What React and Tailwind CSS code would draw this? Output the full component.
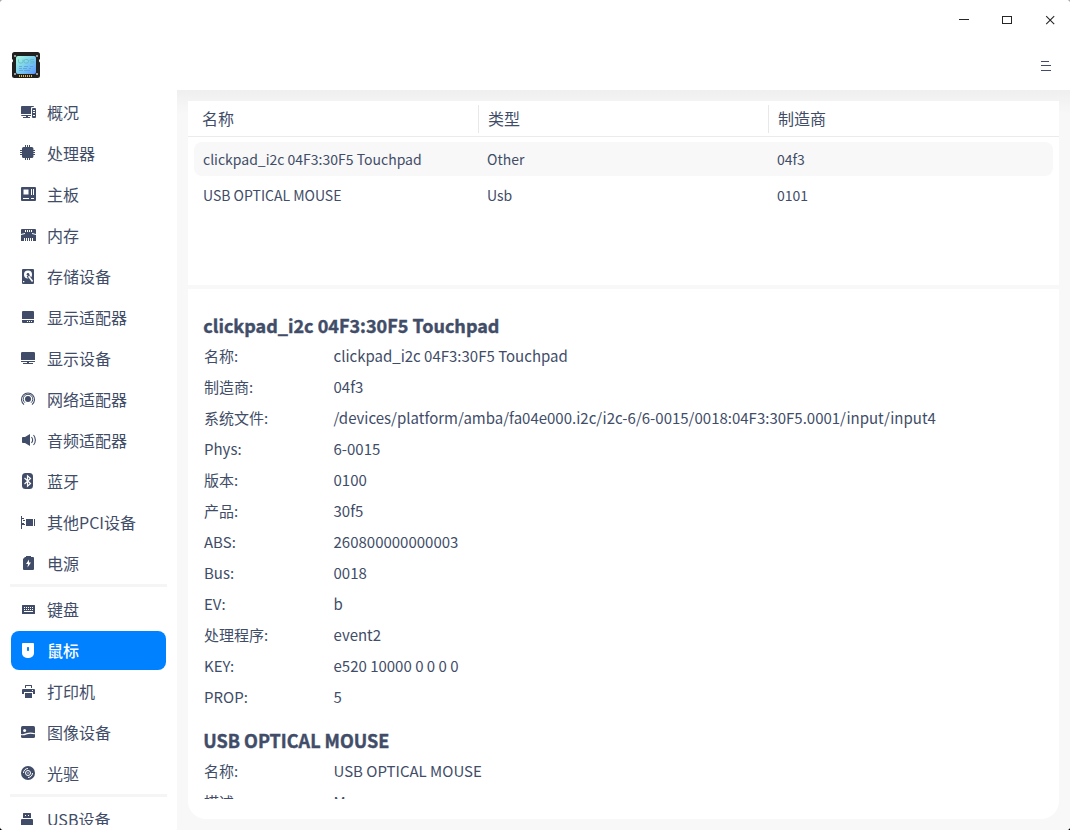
import React from "react";

const Icon = ({ children }) => (
  <svg width="16" height="16" viewBox="0 0 16 16" fill="currentColor" className="shrink-0">
    {children}
  </svg>
);

const icons = {
  overview: (
    <>
      <path d="M2 2h11a1 1 0 0 1 1 1h-2a1 1 0 0 0-1 1v6H1V3a1 1 0 0 1 1-1zM1 11h10v1H8v1h2v1H3v-1h3v-1H2a1 1 0 0 1-1-1z" />
      <path fillRule="evenodd" d="M13 4h2a1 1 0 0 1 1 1v8a1 1 0 0 1-1 1h-2a1 1 0 0 1-1-1V5a1 1 0 0 1 1-1zm0 2v1h2V6zm0 2v1h2V8zm0 3v1h2v-1z" />
    </>
  ),
  cpu: (
    <>
      <rect x="2" y="2" width="11.4" height="11" rx="1.5" />
      <path d="M5 0h1v15H5zM7 0h1v15H7zM9 0h1v15H9zM0 5h15v1H0zM0 7h15v1H0zM0 9h15v1H0z" />
    </>
  ),
  board: (
    <path fillRule="evenodd" d="M2 1h13a1 1 0 0 1 1 1v12a1 1 0 0 1-1 1H2a1 1 0 0 1-1-1V2a1 1 0 0 1 1-1zM3.500 3.500v5h5v-5zM11 3v6h1V3zm2 0v6h1V3zM3 12v1h6v-1zm8 0v1h3v-1z" />
  ),
  memory: (
    <>
      <path fillRule="evenodd" d="M2 2h13a1 1 0 0 1 1 1v11H1V3a1 1 0 0 1 1-1zM5 3v2h1V3zm2 0v2h1V3zm2 0v2h1V3zm2 0v2h1V3zM4 11v3h1v-3zm2 0v3h1v-3zm2 0v3h1v-3zm2 0v3h1v-3zm2 0v3h1v-3z" />
      <path d="M1 7.500l4-1M16 7.500l-4-1" stroke="white" strokeWidth="1" fill="none" />
    </>
  ),
  disk: (
    <>
      <rect x="2" y="1" width="12" height="15" rx="1" />
      <circle cx="8" cy="6.500" r="4" fill="white" />
      <circle cx="8" cy="6.300" r="1.300" />
      <path d="M7.800 7.500l5 6.500" stroke="currentColor" strokeWidth="3" />
      <path d="M8.600 8.200l4 5.300" stroke="white" strokeWidth="1.600" />
      <path d="M3 13h1.300v1.300H3z" fill="white" />
    </>
  ),
  gpu: (
    <>
      <path d="M3 2h10a1 1 0 0 1 1 1v7H2V3a1 1 0 0 1 1-1z" />
      <path fillRule="evenodd" d="M2 11h12v2a1 1 0 0 1-1 1H3a1 1 0 0 1-1-1zm5 1v1h1v-1zm2 0v1h1v-1zm2 0v1h1v-1z" />
    </>
  ),
  monitor: (
    <path d="M2.2 2h11.6A1.2 1.2 0 0 1 15 3.200V10H1V3.200A1.200 1.200 0 0 1 2.200 2zM1 11h14v.5a.5.5 0 0 1-.5.5H9v1h4v1H3v-1h4v-1H1.500a.5.5 0 0 1-.5-.5z" />
  ),
  network: (
    <>
      <circle cx="8" cy="8" r="3" />
      <g fill="none" stroke="currentColor">
        <path d="M4.900 11.700a4.800 4.800 0 1 1 6.200 0" strokeWidth="1" />
        <path d="M4 13.600a6.500 6.500 0 1 1 8 0" strokeWidth="1.100" />
      </g>
    </>
  ),
  audio: (
    <>
      <path d="M2.800 5H5l5-3v12l-5-3H2.800a.8.800 0 0 1-.8-.8V5.800a.8.800 0 0 1 .8-.8z" />
      <g fill="none" stroke="currentColor" strokeWidth="1.100">
        <path d="M11.500 5c1.300 1.700 1.300 4.300 0 6" />
        <path d="M13.500 3c2.500 2.800 2.500 7.200 0 10" />
      </g>
    </>
  ),
  bluetooth: (
    <>
      <rect x="2" y="0" width="11" height="16" rx="3.500" />
      <path d="M4.500 5l6 5.500-3 2.700V2.800l3 2.700-6 5.500" fill="none" stroke="white" strokeWidth="1.200" />
    </>
  ),
  pci: (
    <path d="M1 2h1v2h2v1H2v4h2v1H2v5H1zM3 6h2v1H3zM6 5h7v7H6zM14 5h1v7h-1zM2 10h3v1H2z" />
  ),
  power: (
    <>
      <path d="M6 1h5v1h2a1 1 0 0 1 1 1v11a1 1 0 0 1-1 1H4a1 1 0 0 1-1-1V4l2-2h1z" />
      <path d="M9 4.500L6 9h2l-.5 3.500L11 7.600H9z" fill="white" />
    </>
  ),
  keyboard: (
    <path fillRule="evenodd" d="M2.500 4h12a.5.5 0 0 1 .5.5v8a.5.5 0 0 1-.5.5h-12a.5.5 0 0 1-.5-.5v-8a.5.5 0 0 1 .5-.5zM4 6v1h1V6zm2 0v1h1V6zm2 0v1h1V6zm2 0v1h1V6zm2 0v1h1V6zM4 8v1h1V8zm2 0v1h1V8zm2 0v1h1V8zm2 0v1h1V8zm2 0v1h1V8zm-8 2v1h9v-1z" />
  ),
  mouse: (
    <path fillRule="evenodd" d="M3 1h10a1 1 0 0 1 1 1v9a5 5 0 0 1-5 5H7a5 5 0 0 1-5-5V2a1 1 0 0 1 1-1zm4.700 4a.7.700 0 0 0-.7.700v2.600a.7.700 0 0 0 .7.700h.6a.7.700 0 0 0 .7-.7V5.700a.7.700 0 0 0-.7-.7z" />
  ),
  printer: (
    <>
      <path d="M5.500 2h6a.5.500 0 0 1 .5.500V5h-1V3H6v2H5V2.500a.5.500 0 0 1 .5-.5z" />
      <path fillRule="evenodd" d="M3 6h11a1 1 0 0 1 1 1v4h-2V9H4v2H2V7a1 1 0 0 1 1-1zm9 1v1h1V7z" />
      <path d="M5 10h7v5H5z" />
    </>
  ),
  image: (
    <>
      <rect x="1" y="2" width="14" height="12" rx="1.500" />
      <circle cx="4.600" cy="6.500" r="1.500" fill="white" />
      <path d="M1 10.500c2.500.8 4.200-.2 6-.9 2.600-.9 5-.7 8 .2" fill="none" stroke="white" strokeWidth="1.200" />
    </>
  ),
  optical: (
    <>
      <circle cx="8" cy="8" r="7" />
      <g fill="none" stroke="white" strokeWidth="1">
        <circle cx="8" cy="8" r="2.500" />
        <path d="M3.500 8A4.500 4.500 0 0 1 8 3.500M12.500 8A4.500 4.500 0 0 1 8 12.500" />
      </g>
      <circle cx="8" cy="8" r=".7" fill="white" />
    </>
  ),
  usb: (
    <>
      <path fillRule="evenodd" d="M3.500 2h7a.5.5 0 0 1 .5.5V7H3V2.500a.5.5 0 0 1 .5-.5zM5 4v1h1V4zm3 0v1h1V4z" />
      <path d="M2 8h10a1 1 0 0 1 1 1v5H1V9a1 1 0 0 1 1-1z" />
    </>
  ),
};

const groups = [
  [
    ["overview", "概况"],
    ["cpu", "处理器"],
    ["board", "主板"],
    ["memory", "内存"],
    ["disk", "存储设备"],
    ["gpu", "显示适配器"],
    ["monitor", "显示设备"],
    ["network", "网络适配器"],
    ["audio", "音频适配器"],
    ["bluetooth", "蓝牙"],
    ["pci", "其他PCI设备"],
    ["power", "电源"],
  ],
  [
    ["keyboard", "键盘"],
    ["mouse", "鼠标"],
    ["printer", "打印机"],
    ["image", "图像设备"],
    ["optical", "光驱"],
  ],
  [["usb", "USB设备"]],
];

const devices = [
  ["clickpad_i2c 04F3:30F5 Touchpad", "Other", "04f3"],
  ["USB OPTICAL MOUSE", "Usb", "0101"],
];

const details = [
  {
    title: "clickpad_i2c 04F3:30F5 Touchpad",
    rows: [
      ["名称:", "clickpad_i2c 04F3:30F5 Touchpad"],
      ["制造商:", "04f3"],
      ["系统文件:", "/devices/platform/amba/fa04e000.i2c/i2c-6/6-0015/0018:04F3:30F5.0001/input/input4"],
      ["Phys:", "6-0015"],
      ["版本:", "0100"],
      ["产品:", "30f5"],
      ["ABS:", "260800000000003"],
      ["Bus:", "0018"],
      ["EV:", "b"],
      ["处理程序:", "event2"],
      ["KEY:", "e520 10000 0 0 0 0"],
      ["PROP:", "5"],
    ],
  },
  {
    title: "USB OPTICAL MOUSE",
    rows: [
      ["名称:", "USB OPTICAL MOUSE"],
      ["描述:", "Mouse"],
    ],
  },
];

function AppLogo() {
  return (
    <svg width="28" height="27" viewBox="0 0 28 27">
      <defs>
        <linearGradient id="chip" x1="0" y1="0" x2="1" y2="1">
          <stop offset="0" stopColor="#a8fbdc" />
          <stop offset=".5" stopColor="#7bcdf0" />
          <stop offset="1" stopColor="#5b95fb" />
        </linearGradient>
      </defs>
      <path d="M2.500 0h23A2.500 2.500 0 0 1 28 2.500V7a2 2 0 0 0 0 3.500V23.500a2.500 2.500 0 0 1-2.500 2.500h-23A2.500 2.500 0 0 1 0 23.500V10.500A2 2 0 0 0 0 7V2.500A2.500 2.500 0 0 1 2.500 0z" fill="#202020" />
      <rect x="4" y="4" width="20" height="18" rx="2" fill="url(#chip)" />
      <g fill="#b5b5b5">
        <circle cx="3" cy="4" r="1.100" />
        <circle cx="25" cy="4" r="1.100" />
        <circle cx="3" cy="22" r="1.100" />
        <circle cx="25" cy="22" r="1.100" />
      </g>
      <g fill="none" stroke="#5fb5bd" strokeWidth=".8">
        <path d="M6.500 7.500v2a1.500 1.500 0 0 0 1.500 1.500h1.500a1.500 1.500 0 0 0 1.500-1.500v-2" />
        <rect x="12" y="7.500" width="4.500" height="3.500" rx="1.500" />
        <path d="M22 7.500h-3q-1 0-1 .9t1 .9h2q1 0 1 .8t-1 .9h-3" />
      </g>
      <path d="M7 14.500h3m2 0h4m2 0h3M7 16.500h3m1 0h4m2 0h2M7 18.500h4m1 0h6" stroke="#4d93c8" strokeWidth=".6" />
      <path d="M7.500 23v2m2-2v2m2-2v2m2-2v2m2-2v2m2-2v2m2-2v2" stroke="#e0b33a" strokeWidth="1" />
    </svg>
  );
}

function TitleArea() {
  return (
    <header className="flex h-[90px] shrink-0 justify-between bg-white">
      <div className="pt-[52px] pl-3">
        <AppLogo />
      </div>
      <div className="flex flex-col items-end">
        <div className="flex h-10 items-center gap-[27px] pr-3 text-[#262626]">
          <svg width="16" height="16" viewBox="0 0 16 16" shapeRendering="crispEdges">
            <path d="M3 7h10v1H3z" fill="currentColor" />
          </svg>
          <svg width="16" height="16" viewBox="0 0 16 16" shapeRendering="crispEdges">
            <path d="M3.500 4.500h9v7h-9z" fill="none" stroke="currentColor" />
          </svg>
          <svg width="16" height="16" viewBox="0 0 16 16">
            <path d="M4.200 4.200l8 8m0-8l-8 8" fill="none" stroke="currentColor" strokeWidth="1.100" />
          </svg>
        </div>
        <svg width="12" height="12" viewBox="0 0 12 12" shapeRendering="crispEdges" className="mt-5 mr-[18px] text-[#414d68]">
          <path d="M1 1h8v1H1zM1 5h10v1H1zM1 10h10v1H1z" fill="currentColor" />
        </svg>
      </div>
    </header>
  );
}

function Sidebar() {
  return (
    <nav className="w-[177px] shrink-0 bg-white pb-[5px]">
      <div className="flex h-full flex-col gap-[1px] overflow-hidden pt-[3px] pr-[11px] pl-2.5">
        {groups.map((group, i) => (
          <React.Fragment key={i}>
            {i > 0 && <div className="-mr-px h-[3px] shrink-0 bg-[#f5f5f5]" />}
            <ul className={i > 0 ? "mt-0.5 flex shrink-0 flex-col gap-0.5" : "flex shrink-0 flex-col gap-0.5"}>
              {group.map(([key, label]) => (
                <li
                  key={key}
                  className={
                    key === "mouse"
                      ? "ml-px flex h-[39px] items-start rounded-lg bg-[#0081ff] pt-[11px] pl-[9px] font-medium text-white"
                      : "ml-px flex h-[39px] items-start pt-[11px] pl-[9px]"
                  }
                >
                  <Icon>{icons[key]}</Icon>
                  <span className="-mt-1 ml-[11px] text-base leading-6 whitespace-nowrap">{label}</span>
                </li>
              ))}
            </ul>
          </React.Fragment>
        ))}
      </div>
    </nav>
  );
}

function DeviceTable() {
  return (
    <section className="h-[184px] shrink-0 bg-white">
      <div className="flex h-9 items-center border-b border-[#ebebeb] text-base">
        <div className="flex h-7 w-[291px] items-center border-r border-[#e8e8e8] pb-0.5 pl-3.5">名称</div>
        <div className="flex h-7 w-[290px] items-center border-r border-[#e8e8e8] pb-0.5 pl-[9px]">类型</div>
        <div className="pb-0.5 pl-[9px]">制造商</div>
      </div>
      <div className="flex flex-col gap-0.5 px-1.5 pt-[5px] text-sm">
        {devices.map(([name, type, vendor], i) => (
          <div key={name} className={i === 0 ? "flex h-[34px] items-center rounded-lg bg-[#f8f8f8] pl-[9px]" : "flex h-[34px] items-center pl-[9px]"}>
            <span className="w-[284px]">{name}</span>
            <span className="w-[290px]">{type}</span>
            <span>{vendor}</span>
          </div>
        ))}
      </div>
    </section>
  );
}

function DeviceDetails() {
  return (
    <section className="h-[530px] rounded-b-[18px] bg-white pt-[22px] pb-5">
      <div className="flex h-full flex-col gap-[13px] overflow-hidden pl-[15.25px]">
        {details.map((d) => (
          <div key={d.title} className="shrink-0">
            <h2 className="h-[30px] text-lg leading-7 font-bold [-webkit-text-stroke:0.4px_currentColor]">{d.title}</h2>
            {d.rows.map(([k, v]) => (
              <div key={k} className="flex h-[31px] items-center text-[15px]">
                <span className="w-[130.25px] pl-[0.75px]">{k}</span>
                <span>{v}</span>
              </div>
            ))}
          </div>
        ))}
      </div>
    </section>
  );
}

export default function App() {
  return (
    <div className="h-[830px] w-[1070px] bg-linear-to-b from-[#aaa] to-black font-['Noto_Sans_CJK_SC',sans-serif] text-[#414d68]">
      <div className="flex h-full flex-col overflow-hidden rounded-[4px] bg-white">
        <TitleArea />
        <div className="flex min-h-0 flex-1">
          <Sidebar />
          <main className="flex flex-1 flex-col gap-1 bg-[#f8f8f8] bg-[linear-gradient(#efefef,#f8f8f8_24px)] px-[11px] pt-[11px]">
            <DeviceTable />
            <DeviceDetails />
          </main>
        </div>
      </div>
    </div>
  );
}
